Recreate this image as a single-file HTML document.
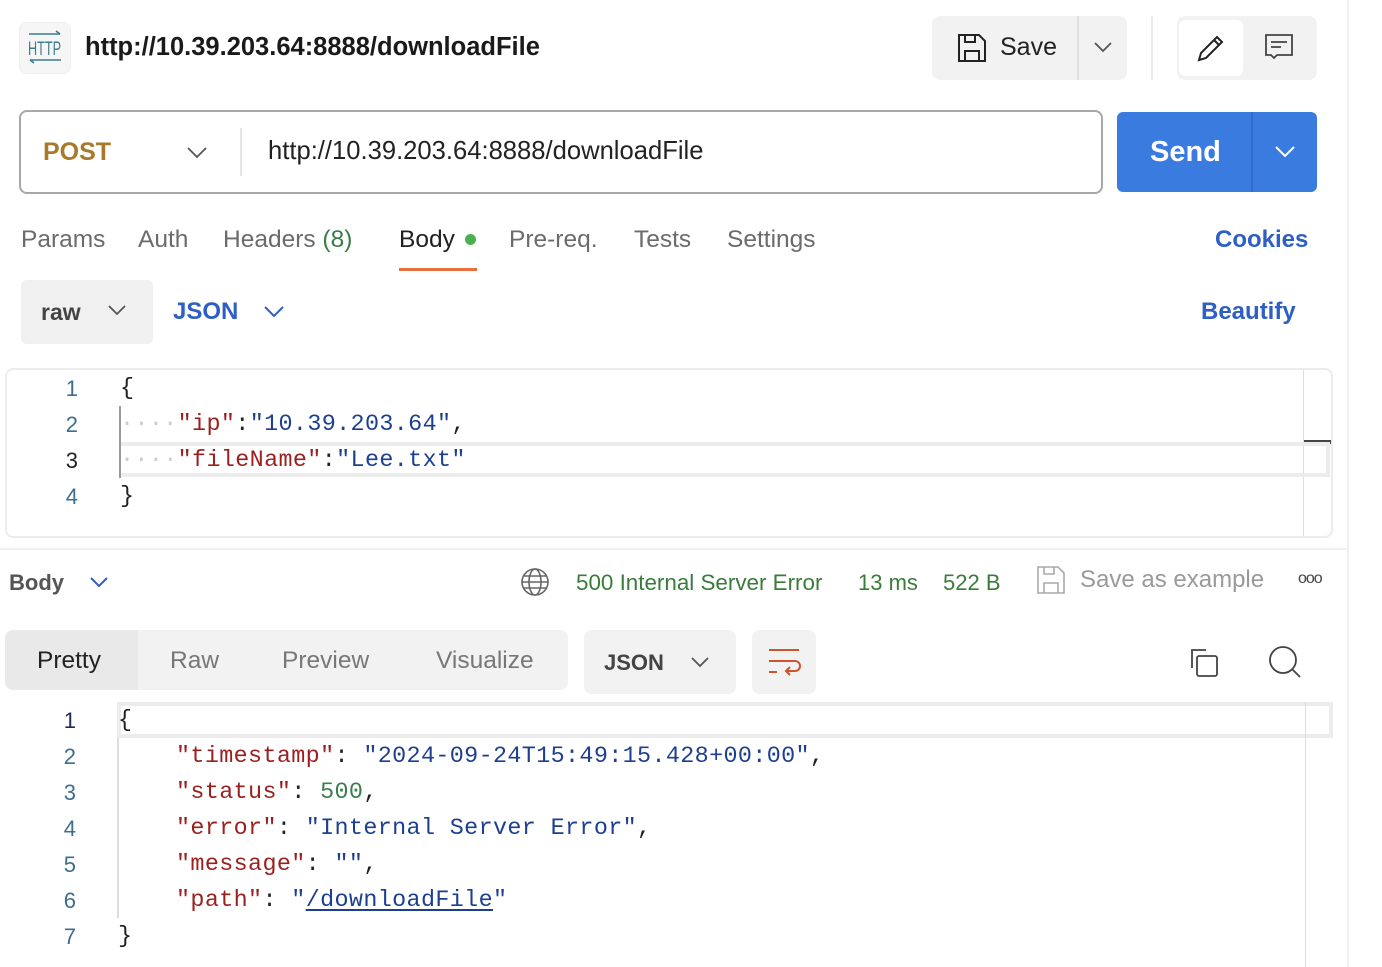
<!DOCTYPE html>
<html><head><meta charset="utf-8"><style>
*{box-sizing:border-box;margin:0;padding:0}
body{width:1382px;height:967px;overflow:hidden;background:#fff;font-family:"Liberation Sans",sans-serif;position:relative;color:#212121}
.a{position:absolute}
.t{position:absolute;white-space:nowrap}
.mono{font-family:"Liberation Mono",monospace;font-size:23.4px;letter-spacing:0.37px;white-space:pre;position:absolute}
.k{color:#9a1f1f}.s{color:#1d3f8f}.n{color:#3a7c4b}
.ln{position:absolute;font-size:22px;color:#3d6e8f;width:30px;text-align:right}
</style></head><body>
<div class="a" style="left:1347px;top:0;width:2px;height:967px;background:#f0f0f0"></div>
<div class="a" style="left:19px;top:22px;width:52px;height:52px;border-radius:8px;background:#f6f6f6;border:1px solid #eee"></div>
<svg class="a" style="left:26px;top:30px" width="38" height="36" viewBox="0 0 38 36"><path d="M3 4H34M30 1l4 3" stroke="#3b7d8a" stroke-width="1.6" fill="none"/><text x="2" y="25" font-family="Liberation Sans" font-size="19" fill="#3b7d8a" textLength="33" lengthAdjust="spacingAndGlyphs">HTTP</text><path d="M35 30H4M8 33l-4-3" stroke="#3b7d8a" stroke-width="1.6" fill="none"/></svg>
<div class="t" style="left:85px;top:33px;font-size:25.5px;font-weight:bold;color:#1a1a1a">http://10.39.203.64:8888/downloadFile</div>
<div class="a" style="left:932px;top:16px;width:195px;height:64px;border-radius:8px;background:#f2f2f2"></div>
<div class="a" style="left:1077px;top:16px;width:2px;height:64px;background:#e0e0e0"></div>
<svg class="a" style="left:956px;top:32px" width="32" height="32" viewBox="0 0 32 32" fill="none" stroke="#222" stroke-width="2"><path d="M3 3h20l6 6v20H3z"/><path d="M9 3v7h10V3M9 29v-10h14v10"/></svg>
<div class="t" style="left:1000px;top:33px;font-size:25px;color:#222">Save</div>
<svg class="a" style="left:1093px;top:40px" width="20" height="14"><path d="M2 3l8 8 8-8" stroke="#555" stroke-width="1.8" fill="none"/></svg>
<div class="a" style="left:1151px;top:16px;width:2px;height:64px;background:#ececec"></div>
<div class="a" style="left:1177px;top:16px;width:140px;height:64px;border-radius:8px;background:#f2f2f2"></div>
<div class="a" style="left:1179px;top:20px;width:64px;height:56px;border-radius:6px;background:#fff"></div>
<svg class="a" style="left:1195px;top:33px" width="32" height="30" viewBox="0 0 32 30" fill="none" stroke="#222" stroke-width="2"><path d="M4 27l2-7L22 4l5 5-16 16z M19 7l5 5"/></svg>
<svg class="a" style="left:1263px;top:33px" width="32" height="30" viewBox="0 0 32 30" fill="none" stroke="#444" stroke-width="1.8"><path d="M3 2h26v20H14l-3 3-3-3H3z M8 9h16M8 14h10"/></svg>
<div class="a" style="left:19px;top:110px;width:1084px;height:84px;border:2px solid #a8a8a8;border-radius:8px"></div>
<div class="t" style="left:43px;top:138px;font-size:25px;font-weight:bold;color:#a8792a">POST</div>
<svg class="a" style="left:186px;top:144px" width="22" height="16"><path d="M2 4l9 9 9-9" stroke="#555" stroke-width="1.8" fill="none"/></svg>
<div class="a" style="left:240px;top:128px;width:2px;height:48px;background:#e6e6e6"></div>
<div class="t" style="left:268px;top:137px;font-size:25.6px;color:#222">http://10.39.203.64:8888/downloadFile</div>
<div class="a" style="left:1117px;top:112px;width:200px;height:80px;border-radius:6px;background:#3a7be0"></div>
<div class="a" style="left:1251px;top:112px;width:2px;height:80px;background:#316dcc"></div>
<div class="t" style="left:1150px;top:136px;font-size:29px;font-weight:bold;color:#fff">Send</div>
<svg class="a" style="left:1274px;top:143px" width="22" height="16"><path d="M2 4l9 9 9-9" stroke="#fff" stroke-width="2" fill="none"/></svg>
<div class="t" style="left:21px;top:226px;font-size:24.5px;color:#6b6b6b">Params</div>
<div class="t" style="left:138px;top:226px;font-size:24.5px;color:#6b6b6b">Auth</div>
<div class="t" style="left:223px;top:226px;font-size:24.5px;color:#6b6b6b">Headers <span style="color:#3a7c4b">(8)</span></div>
<div class="t" style="left:399px;top:226px;font-size:24.5px;color:#212121">Body</div>
<div class="a" style="left:465px;top:234px;width:11px;height:11px;border-radius:50%;background:#4caf50"></div>
<div class="a" style="left:399px;top:268px;width:78px;height:3px;background:#e8703d"></div>
<div class="t" style="left:509px;top:226px;font-size:24.5px;color:#6b6b6b">Pre-req.</div>
<div class="t" style="left:634px;top:226px;font-size:24.5px;color:#6b6b6b">Tests</div>
<div class="t" style="left:727px;top:226px;font-size:24.5px;color:#6b6b6b">Settings</div>
<div class="t" style="left:1215px;top:226px;font-size:24px;font-weight:bold;color:#2f5fc4">Cookies</div>
<div class="a" style="left:21px;top:280px;width:132px;height:64px;border-radius:6px;background:#f0f0f0"></div>
<div class="t" style="left:41px;top:299px;font-size:23px;font-weight:bold;color:#444">raw</div>
<svg class="a" style="left:107px;top:303px" width="20" height="14"><path d="M2 3l8 8 8-8" stroke="#555" stroke-width="1.8" fill="none"/></svg>
<div class="t" style="left:173px;top:298px;font-size:24px;font-weight:bold;color:#2f5fc4">JSON</div>
<svg class="a" style="left:263px;top:304px" width="22" height="14"><path d="M2 3l9 9 9-9" stroke="#2f5fc4" stroke-width="2" fill="none"/></svg>
<div class="t" style="left:1201px;top:298px;font-size:24px;font-weight:bold;color:#2f5fc4">Beautify</div>
<div class="a" style="left:5px;top:368px;width:1328px;height:170px;border:2px solid #ececec;border-radius:8px"></div>
<div class="a" style="left:1303px;top:370px;width:1px;height:166px;background:#ddd"></div>
<div class="a" style="left:1304px;top:440px;width:27px;height:4px;background:#444"></div>
<div class="a" style="left:120px;top:442px;width:1210px;height:35px;border:4px solid #ececec;border-left:none"></div>
<div class="a" style="left:119px;top:406px;width:2px;height:72px;background:#999"></div>
<div class="ln" style="left:48px;top:376px">1</div>
<div class="ln" style="left:48px;top:412px">2</div>
<div class="ln" style="left:48px;top:448px;color:#222">3</div>
<div class="ln" style="left:48px;top:484px">4</div>
<div class="mono" style="left:120px;top:376px">{</div>
<div class="mono" style="left:120px;top:412px"><span style="color:#ccc">····</span><span class="k">"ip"</span>:<span class="s">"10.39.203.64"</span>,</div>
<div class="mono" style="left:120px;top:448px"><span style="color:#ccc">····</span><span class="k">"fileName"</span>:<span class="s">"Lee.txt"</span></div>
<div class="mono" style="left:120px;top:484px">}</div>
<div class="a" style="left:0;top:548px;width:1347px;height:2px;background:#f0f0f0"></div>
<div class="t" style="left:9px;top:570px;font-size:22px;font-weight:bold;color:#555">Body</div>
<svg class="a" style="left:89px;top:575px" width="20" height="14"><path d="M2 3l8 8 8-8" stroke="#2f5fc4" stroke-width="2" fill="none"/></svg>
<svg class="a" style="left:520px;top:567px" width="30" height="30" viewBox="0 0 30 30" fill="none" stroke="#666" stroke-width="1.6"><circle cx="15" cy="15" r="13"/><ellipse cx="15" cy="15" rx="6" ry="13"/><path d="M2 15h26M4 9h22M4 21h22"/></svg>
<div class="t" style="left:576px;top:570px;font-size:22.4px;color:#3a7c3a">500 Internal Server Error</div>
<div class="t" style="left:858px;top:570px;font-size:22px;color:#3a7c3a">13 ms</div>
<div class="t" style="left:943px;top:570px;font-size:22px;color:#3a7c3a">522 B</div>
<svg class="a" style="left:1036px;top:565px" width="30" height="30" viewBox="0 0 30 30" fill="none" stroke="#aaa" stroke-width="1.6"><path d="M2 2h20l6 6v20H2z M8 2v7h10V2M8 28v-10h14v10"/></svg>
<div class="t" style="left:1080px;top:566px;font-size:24px;color:#9a9a9a">Save as example</div>
<div class="t" style="left:1298px;top:570px;font-size:16px;color:#444;letter-spacing:-1px">ooo</div>
<div class="a" style="left:5px;top:630px;width:563px;height:60px;border-radius:8px;background:#f2f2f2"></div>
<div class="a" style="left:5px;top:630px;width:133px;height:60px;border-radius:8px 0 0 8px;background:#e9e9e9"></div>
<div class="t" style="left:37px;top:647px;font-size:24.5px;color:#222">Pretty</div>
<div class="t" style="left:170px;top:647px;font-size:24.5px;color:#777">Raw</div>
<div class="t" style="left:282px;top:647px;font-size:24.5px;color:#777">Preview</div>
<div class="t" style="left:436px;top:647px;font-size:24.5px;color:#777">Visualize</div>
<div class="a" style="left:584px;top:630px;width:152px;height:64px;border-radius:8px;background:#f2f2f2"></div>
<div class="t" style="left:604px;top:650px;font-size:22px;font-weight:bold;color:#444">JSON</div>
<svg class="a" style="left:690px;top:655px" width="20" height="14"><path d="M2 3l8 8 8-8" stroke="#555" stroke-width="1.8" fill="none"/></svg>
<div class="a" style="left:752px;top:630px;width:64px;height:64px;border-radius:8px;background:#f2f2f2"></div>
<svg class="a" style="left:766px;top:646px" width="36" height="34" viewBox="0 0 36 34" fill="none" stroke="#d0542a" stroke-width="2"><path d="M3 4h30M3 15h26a5 5 0 010 10h-9M24 21l-4 4 4 4M3 26h8"/></svg>
<svg class="a" style="left:1188px;top:646px" width="34" height="34" viewBox="0 0 34 34" fill="none" stroke="#444" stroke-width="1.8"><path d="M4 22V4h14"/><rect x="9" y="10" width="20" height="20" rx="2"/></svg>
<svg class="a" style="left:1267px;top:644px" width="36" height="36" viewBox="0 0 36 36" fill="none" stroke="#444" stroke-width="1.8"><circle cx="16" cy="16" r="13"/><path d="M25 25l8 8"/></svg>
<div class="a" style="left:117px;top:702px;width:1216px;height:36px;border:4px solid #ececec"></div>
<div class="a" style="left:1305px;top:702px;width:1px;height:265px;background:#ddd"></div>
<div class="a" style="left:117px;top:738px;width:2px;height:180px;background:#ddd"></div>
<div class="ln" style="left:46px;top:708px;color:#1d2b5a">1</div>
<div class="ln" style="left:46px;top:744px">2</div>
<div class="ln" style="left:46px;top:780px">3</div>
<div class="ln" style="left:46px;top:816px">4</div>
<div class="ln" style="left:46px;top:852px">5</div>
<div class="ln" style="left:46px;top:888px">6</div>
<div class="ln" style="left:46px;top:924px">7</div>
<div class="mono" style="left:118px;top:708px">{</div>
<div class="mono" style="left:176px;top:744px"><span class="k">"timestamp"</span>: <span class="s">"2024-09-24T15:49:15.428+00:00"</span>,</div>
<div class="mono" style="left:176px;top:780px"><span class="k">"status"</span>: <span class="n">500</span>,</div>
<div class="mono" style="left:176px;top:816px"><span class="k">"error"</span>: <span class="s">"Internal Server Error"</span>,</div>
<div class="mono" style="left:176px;top:852px"><span class="k">"message"</span>: <span class="s">""</span>,</div>
<div class="mono" style="left:176px;top:888px"><span class="k">"path"</span>: <span class="s">"<span style="text-decoration:underline;text-decoration-thickness:2px;text-underline-offset:3px">/downloadFile</span>"</span></div>
<div class="mono" style="left:118px;top:924px">}</div>
</body></html>
